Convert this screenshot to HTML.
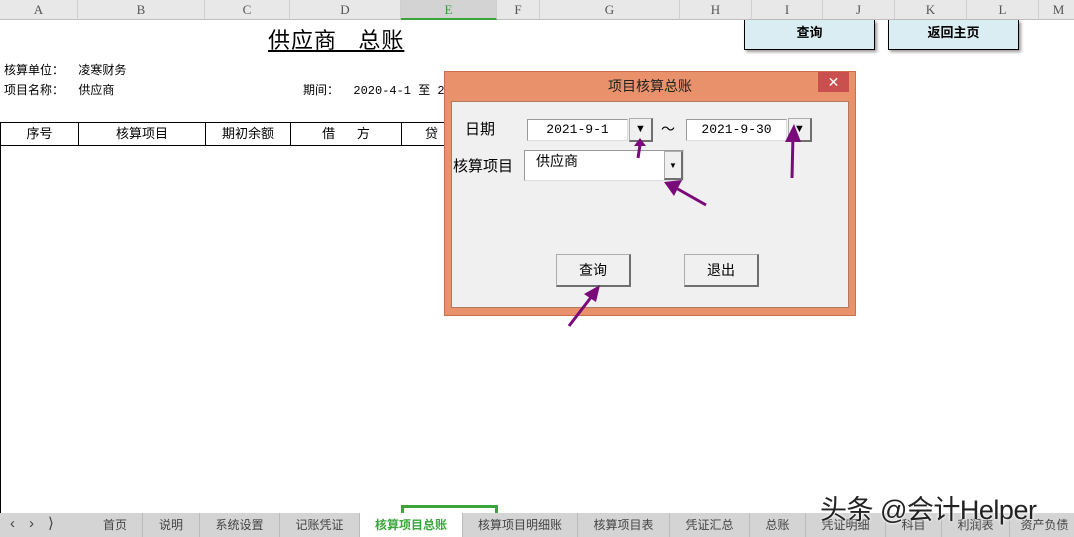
<!DOCTYPE html>
<html><head><meta charset="utf-8"><style>
*{margin:0;padding:0;box-sizing:border-box}
body{width:1074px;height:537px;overflow:hidden;background:#fff;font-family:"Liberation Sans","Noto Sans CJK SC",sans-serif;position:relative;font-size:12px;color:#000}
.abs{position:absolute}
.mono{font-family:"Liberation Mono","Noto Sans CJK SC",monospace}
.colh{position:absolute;top:0;height:20px;background:#e8e8e8;border-bottom:1px solid #bdbdbd;border-right:1px solid #cfcfcf;text-align:center;font-family:"Liberation Serif",serif;font-size:13px;color:#555;line-height:20px}
.th{position:absolute;top:122px;height:24px;border-top:1px solid #000;border-bottom:1px solid #000;border-left:1px solid #000;text-align:center;line-height:22px;font-size:13px}
.tab{position:absolute;top:513px;height:24px;background:#d4d4d4;border-right:1px solid #bbb;text-align:center;line-height:24px;font-size:12px;color:#444}
.btn3{position:absolute;background:#f0f0f0;border:1px solid #adadad;border-right:2px solid #6f6f6f;border-bottom:2px solid #6f6f6f;text-align:center;font-size:14px}
.inp{position:absolute;background:#fff;border:1px solid #999;border-right-color:#ddd;border-bottom-color:#ddd;font-size:13px;text-align:center}
</style></head><body>
<div class="colh" style="left:0;width:78px">A</div>
<div class="colh" style="left:78px;width:127px">B</div>
<div class="colh" style="left:205px;width:85px">C</div>
<div class="colh" style="left:290px;width:111px">D</div>
<div class="colh" style="left:401px;width:96px;background:#d3d3d3;color:#3a9a3a;border-bottom:2px solid #3aa53a">E</div>
<div class="colh" style="left:497px;width:43px">F</div>
<div class="colh" style="left:540px;width:140px">G</div>
<div class="colh" style="left:680px;width:72px">H</div>
<div class="colh" style="left:752px;width:71px">I</div>
<div class="colh" style="left:823px;width:72px">J</div>
<div class="colh" style="left:895px;width:72px">K</div>
<div class="colh" style="left:967px;width:72px">L</div>
<div class="colh" style="left:1039px;width:40px">M</div>

<div class="abs" style="left:268px;top:23px;font-size:22px;text-decoration:underline;letter-spacing:1px">供应商&nbsp;&nbsp;&nbsp;总账</div>
<div class="abs mono" style="left:4px;top:61px;font-size:12px">核算单位：&nbsp;&nbsp;凌寒财务</div>
<div class="abs mono" style="left:4px;top:81px;font-size:12px">项目名称：&nbsp;&nbsp;供应商</div>
<div class="abs mono" style="left:303px;top:81px;font-size:12px">期间：&nbsp;&nbsp;2020-4-1&nbsp;至&nbsp;20</div>

<div class="th" style="left:0;width:78px">序号</div>
<div class="th" style="left:78px;width:127px">核算项目</div>
<div class="th" style="left:205px;width:85px">期初余额</div>
<div class="th" style="left:290px;width:111px">借&nbsp;&nbsp;&nbsp;&nbsp;&nbsp;&nbsp;方</div>
<div class="th" style="left:401px;width:60px">贷</div>
<div class="abs" style="left:0;top:146px;width:1px;height:367px;background:#000"></div>

<div class="abs" style="left:744px;top:20px;width:131px;height:30px;background:#daedf3;border:1px solid #000;border-top:none;box-shadow:2px 2px 3px #999;text-align:center;font-weight:bold;font-size:13px;line-height:26px">查询</div>
<div class="abs" style="left:888px;top:20px;width:131px;height:30px;background:#daedf3;border:1px solid #000;border-top:none;box-shadow:2px 2px 3px #999;text-align:center;font-weight:bold;font-size:13px;line-height:26px">返回主页</div>

<div class="abs" style="left:444px;top:71px;width:412px;height:245px;background:#e8916a;border:1px solid #c87050"></div>
<div class="abs" style="left:444px;top:76px;width:412px;text-align:center;font-size:14px;color:#222">项目核算总账</div>
<div class="abs" style="left:818px;top:72px;width:31px;height:20px;background:#c9504f;color:#fff;text-align:center;font-size:14px;line-height:20px">✕</div>
<div class="abs" style="left:451px;top:101px;width:398px;height:207px;background:#f0f0f0;border:1px solid #b07a60"></div>
<div class="abs" style="left:465px;top:118px;font-size:15px">日期</div>
<div class="inp mono" style="left:527px;top:119px;width:101px;height:22px;line-height:20px">2021-9-1</div>
<div class="btn3" style="left:629px;top:118px;width:24px;height:24px;font-size:11px;line-height:20px">▼</div>
<div class="abs" style="left:661px;top:119px;font-size:14px">～</div>
<div class="inp mono" style="left:686px;top:119px;width:101px;height:22px;line-height:20px">2021-9-30</div>
<div class="btn3" style="left:788px;top:118px;width:24px;height:24px;font-size:11px;line-height:20px">▼</div>
<div class="abs" style="left:453px;top:155px;font-size:15px">核算项目</div>
<div class="inp" style="left:524px;top:150px;width:160px;height:31px;text-align:left;padding-left:11px;font-size:14px;line-height:20px">供应商</div>
<div class="btn3" style="left:664px;top:151px;width:19px;height:29px;font-size:8px;line-height:28px">▼</div>
<div class="btn3" style="left:556px;top:254px;width:75px;height:33px;line-height:30px">查询</div>
<div class="btn3" style="left:684px;top:254px;width:75px;height:33px;line-height:30px">退出</div>

<svg class="abs" style="left:0;top:0" width="1074" height="537">
<g fill="#7a0a7a" stroke="#7a0a7a" stroke-width="3">
<line x1="638" y1="158" x2="640" y2="145"/><polygon points="634,146 646,146 640,138" stroke="none"/>
<line x1="792" y1="178" x2="793" y2="135"/><polygon points="785,142 801,142 794,124" stroke="none"/>
<line x1="706" y1="205" x2="676" y2="188"/><polygon points="664,182 682,180 674,196" stroke="none"/>
<line x1="569" y1="326" x2="592" y2="296"/><polygon points="600,285 596,302 584,294" stroke="none"/>
</g></svg>

<div class="abs" style="left:401px;top:505px;width:97px;height:9px;border:3px solid #3aa53a;border-bottom:none"></div>
<div class="abs" style="left:0;top:513px;width:88px;height:24px;background:#d4d4d4;color:#444;font-size:15px;line-height:22px;padding-left:10px;letter-spacing:14px">‹›⟩</div>
<div class="tab" style="left:88px;width:55px">首页</div>
<div class="tab" style="left:143px;width:57px">说明</div>
<div class="tab" style="left:200px;width:80px">系统设置</div>
<div class="tab" style="left:280px;width:80px">记账凭证</div>
<div class="tab" style="left:360px;width:103px;background:#fff;color:#3aa53a;font-weight:bold">核算项目总账</div>
<div class="tab" style="left:463px;width:115px">核算项目明细账</div>
<div class="tab" style="left:578px;width:92px">核算项目表</div>
<div class="tab" style="left:670px;width:80px">凭证汇总</div>
<div class="tab" style="left:750px;width:56px">总账</div>
<div class="tab" style="left:806px;width:80px">凭证明细</div>
<div class="tab" style="left:886px;width:56px">科目</div>
<div class="tab" style="left:942px;width:68px">利润表</div>
<div class="tab" style="left:1010px;width:70px">资产负债</div>
<div class="abs" style="left:820px;top:488px;font-size:27px;color:#222;letter-spacing:-0.5px;text-shadow:0 0 2px #fff,0 0 3px #fff">头条 @会计Helper</div>
</body></html>
